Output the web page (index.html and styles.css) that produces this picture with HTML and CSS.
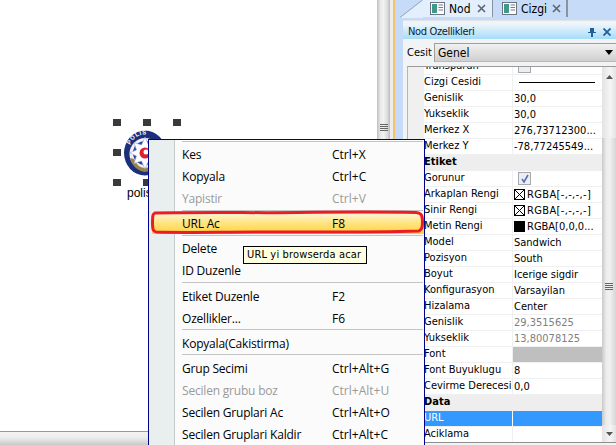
FILE: index.html
```html
<!DOCTYPE html>
<html lang="tr">
<head>
<meta charset="utf-8">
<title>Nod Ozellikleri</title>
<link rel="stylesheet" href="styles.css">
</head>
<body>
<div class="app">
  <div class="work">
    <div class="canvas">
      <svg class="badge" viewBox="0 0 44 46" width="44" height="46">
        <defs><path id="arc" d="M6 20C8 9 15 4.500 22 4.500S36 9 38 20"/></defs>
        <ellipse cx="22" cy="23" rx="21" ry="22.500" fill="#1c2f7c"/>
        <ellipse cx="22" cy="24" rx="15.500" ry="16" fill="#eef0f6"/>
        <path d="M7 28c2 8 8 13 15 14 7-1 13-6 15-14l-4 1c-2 5-6 9-11 9s-9-4-11-9z" fill="#9a8442"/>
        <circle cx="22" cy="23" r="12" fill="#2a45a0"/>
        <path d="M22 7l3.500 8 7.500-2.500-2.500 7.500 7 3-7 3 2.500 7.500-7.500-2.500-3.500 8-3.500-8-7.500 2.500 2.500-7.500-7-3 7-3-2.500-7.500 7.500 2.500z" fill="#fff" stroke="#9aa4c4" stroke-width=".6"/>
        <circle cx="22" cy="23" r="5.500" fill="#e01f2c"/>
        <circle cx="23" cy="22" r="2.500" fill="#fff"/>
        <text class="badge-text"><textPath href="#arc" startOffset="5">POLIS</textPath></text>
      </svg>
      <span class="handle h1"></span><span class="handle h2"></span><span class="handle h3"></span>
      <span class="handle h4"></span><span class="handle h5"></span><span class="handle h6"></span>
      <span class="node-label">polis</span>
    </div>
    <div class="hscroll"></div>
  </div>
  <div class="vscroll"><span class="grip"><i></i><i></i><i></i><i></i></span></div>
  <div class="gap"></div>
  <div class="splitter"></div>

  <div class="dock">
    <div class="tabs">
      <svg class="tab-slope" width="23" height="18" viewBox="0 0 23 18"><path d="M0 18L23 0V18z" fill="#e3effd"/><path d="M0 17.500L22.500 0" stroke="#9aa3ad" fill="none"/></svg>
      <div class="tab tab-active">
        <svg class="tab-icon" width="15" height="13" viewBox="0 0 15 13"><rect x=".5" y=".5" width="14" height="12" fill="#fff" stroke="#6d7680"/><rect x="2" y="2" width="5" height="9" fill="#3f9a8c"/><path d="M8.500 3H13M8.500 5.500H13M8.500 8H13" stroke="#778"/></svg>
        <span class="tab-name">Nod</span>
        <svg class="tab-x" width="9" height="9" viewBox="0 0 9 9"><path d="M1 1l7 7M8 1L1 8" stroke="#5c6670" stroke-width="1.600"/></svg>
      </div>
      <div class="tab tab-idle">
        <svg class="tab-icon" width="15" height="13" viewBox="0 0 15 13"><rect x=".5" y=".5" width="14" height="12" fill="#fff" stroke="#6d7680"/><rect x="2" y="2" width="5" height="9" fill="#3f9a8c"/><path d="M8.500 3H13M8.500 5.500H13M8.500 8H13" stroke="#778"/></svg>
        <span class="tab-name">Cizgi</span>
        <svg class="tab-x" width="9" height="9" viewBox="0 0 9 9"><path d="M1 1l7 7M8 1L1 8" stroke="#5c6670" stroke-width="1.600"/></svg>
      </div>
    </div>
    <div class="panel">
      <div class="title">
        <span class="title-text">Nod Ozellikleri</span>
        <svg width="8" height="10" viewBox="0 0 8 10"><path d="M2 1h4v4h2v1H5v4H3V6H0V5h2z" fill="#1f5f9c"/></svg>
        <svg class="title-x" width="8" height="8" viewBox="0 0 8 8"><path d="M.5 .5l7 7M7.500 .5l-7 7" stroke="#1f5f9c" stroke-width="1.800"/></svg>
      </div>
      <div class="filter">
        <span class="filter-label">Cesit</span>
        <div class="combo"><span>Genel</span><svg width="8" height="5" viewBox="0 0 8 5"><path d="M0 0h8L4 5z" fill="#000"/></svg></div>
      </div>
      <div class="grid-wrap">
        <div class="gutter"></div>
        <div class="grid">
          <div class="rows">
            <div class="row"><div class="k">Transparan</div><div class="v"><span class="check"></span></div></div>
            <div class="row"><div class="k">Cizgi Cesidi</div><div class="v"><span class="line-sample"></span></div></div>
            <div class="row"><div class="k">Genislik</div><div class="v">30,0</div></div>
            <div class="row"><div class="k">Yukseklik</div><div class="v">30,0</div></div>
            <div class="row"><div class="k">Merkez X</div><div class="v">276,73712300...</div></div>
            <div class="row"><div class="k">Merkez Y</div><div class="v">-78,77245549...</div></div>
            <div class="row cat">Etiket</div>
            <div class="row"><div class="k">Gorunur</div><div class="v"><span class="check checked"><svg width="10" height="10" viewBox="0 0 10 10"><path d="M2 5l2 3 4-7" fill="none" stroke="#5a6fb8" stroke-width="1.600"/></svg></span></div></div>
            <div class="row"><div class="k">Arkaplan Rengi</div><div class="v rgba"><svg class="swatch" width="11" height="11" viewBox="0 0 11 11"><rect x=".5" y=".5" width="10" height="10" fill="#fff" stroke="#000"/><path d="M1 1l9 9M10 1l-9 9" stroke="#000"/></svg>RGBA[-,-,-,-]</div></div>
            <div class="row"><div class="k">Sinir Rengi</div><div class="v rgba"><svg class="swatch" width="11" height="11" viewBox="0 0 11 11"><rect x=".5" y=".5" width="10" height="10" fill="#fff" stroke="#000"/><path d="M1 1l9 9M10 1l-9 9" stroke="#000"/></svg>RGBA[-,-,-,-]</div></div>
            <div class="row"><div class="k">Metin Rengi</div><div class="v"><svg class="swatch" width="11" height="11" viewBox="0 0 11 11"><rect width="11" height="11" fill="#000"/></svg>RGBA[0,0,0...</div></div>
            <div class="row"><div class="k">Model</div><div class="v">Sandwich</div></div>
            <div class="row"><div class="k">Pozisyon</div><div class="v">South</div></div>
            <div class="row"><div class="k">Boyut</div><div class="v">Icerige sigdir</div></div>
            <div class="row"><div class="k">Konfigurasyon</div><div class="v">Varsayilan</div></div>
            <div class="row"><div class="k">Hizalama</div><div class="v">Center</div></div>
            <div class="row"><div class="k">Genislik</div><div class="v muted">29,3515625</div></div>
            <div class="row"><div class="k">Yukseklik</div><div class="v muted">13,80078125</div></div>
            <div class="row"><div class="k">Font</div><div class="v filled"></div></div>
            <div class="row"><div class="k">Font Buyuklugu</div><div class="v">8</div></div>
            <div class="row"><div class="k">Cevirme Derecesi</div><div class="v">0,0</div></div>
            <div class="row cat">Data</div>
            <div class="row selected"><div class="k">URL</div><div class="v"></div></div>
            <div class="row"><div class="k">Aciklama</div><div class="v"></div></div>
          </div>
        </div>
        <div class="grid-scroll">
          <svg class="arrow" width="7" height="4" viewBox="0 0 7 4"><path d="M3.500 0L7 4H0z" fill="#555"/></svg>
          <div class="thumb"><span class="grip"><i></i><i></i><i></i><i></i></span></div>
          <svg class="arrow" width="7" height="4" viewBox="0 0 7 4"><path d="M0 0h7L3.500 4z" fill="#555"/></svg>
        </div>
      </div>
    </div>
  </div>
</div>

<div class="menu">
  <div class="strip"></div>
  <div class="menu-list">
    <div class="sep sep-top"></div>
    <div class="item"><span>Kes</span><span>Ctrl+X</span></div>
    <div class="item"><span>Kopyala</span><span>Ctrl+C</span></div>
    <div class="item off"><span>Yapistir</span><span>Ctrl+V</span></div>
    <div class="sep"></div>
    <div class="item hot"><span>URL Ac</span><span>F8</span></div>
    <div class="sep sep-thin"></div>
    <div class="item"><span>Delete</span><span></span></div>
    <div class="item"><span>ID Duzenle</span><span></span></div>
    <div class="sep"></div>
    <div class="item"><span>Etiket Duzenle</span><span>F2</span></div>
    <div class="item"><span>Ozellikler...</span><span>F6</span></div>
    <div class="sep sep-low"></div>
    <div class="item"><span>Kopyala(Cakistirma)</span><span></span></div>
    <div class="sep sep-low"></div>
    <div class="item"><span>Grup Secimi</span><span>Ctrl+Alt+G</span></div>
    <div class="item off"><span>Secilen grubu boz</span><span>Ctrl+Alt+U</span></div>
    <div class="item"><span>Secilen Gruplari Ac</span><span>Ctrl+Alt+O</span></div>
    <div class="item"><span>Secilen Gruplari Kaldir</span><span>Ctrl+Alt+C</span></div>
  </div>
</div>

<svg class="marker" width="280" height="30" viewBox="0 0 280 30">
  <path d="M7 5C60 4 110 5 150 4.500S240 4 268 4.500C272 5 274.500 6 274.500 13S274 21 271 23C220 24.500 170 24 120 24S30 25 8 24C5 23.500 4.500 21 4.500 14S5 6 7 5z" fill="none" stroke="#ed1c24" stroke-width="3"/>
</svg>

<div class="tooltip">URL yi browserda acar</div>
</body>
</html>
```

FILE: styles.css
```css
* { box-sizing: border-box; }
html, body { margin: 0; padding: 0; width: 616px; height: 445px; overflow: hidden; background: #fff; }
body { position: relative; font-family: "Open Sans", "Noto Sans", sans-serif; color: #000; }

.app { display: flex; width: 616px; height: 445px; }

.work { width: 377px; display: flex; flex-direction: column; }
.canvas { position: relative; flex: 1; background: #fff; }
.hscroll { height: 14px; border-top: 1px solid #999; background: linear-gradient(#f3f3f3, #ececec 45%, #c9c9c9); }

.badge { position: absolute; left: 123px; top: 130px; }
.badge-text { font: 700 6px "Liberation Sans", sans-serif; fill: #fff; letter-spacing: .6px; }
.handle { position: absolute; width: 8px; height: 7px; background: #3a3a3a; }
.h1 { left: 113px; top: 119px; }
.h2 { left: 143px; top: 119px; }
.h3 { left: 173px; top: 119px; }
.h4 { left: 113px; top: 149px; }
.h5 { left: 113px; top: 179px; }
.h6 { left: 143px; top: 179px; }
.node-label { position: absolute; left: 127px; top: 186px; font: 12px/14px "Liberation Sans", sans-serif; }

.vscroll { width: 13px; background: linear-gradient(90deg, #bdbdbd, #e8e8e8 25%, #f2f2f2 50%, #dcdcdc 80%, #b9b9b9); display: flex; flex-direction: column; justify-content: flex-start; align-items: center; padding-top: 124px; }
.grip { display: flex; flex-direction: column; gap: 1px; width: 8px; }
.grip i { display: block; height: 1px; background: #666; }
.gap { width: 3px; background: #ededed; }
.splitter { width: 2px; background: #f5c26b; }

.dock { flex: 1; min-width: 0; background: #c5dbf8; display: flex; flex-direction: column; font-family: "DejaVu Sans Condensed", "DejaVu Sans", sans-serif; font-size: 11px; padding-left: 5px; }

.tabs { height: 17px; display: flex; align-items: stretch; }
.tab-slope { flex: none; }
.tab { display: flex; align-items: center; font-size: 12px; }
.tab-active { width: 70px; background: #e3effd; border-right: 1px solid #8a949e; }
.tab-idle { width: 75px; background: #c5dbf8; border-right: 2px solid #8a949e; }
.tab-icon { margin-left: 7px; margin-right: 4px; flex: none; }
.tab-idle .tab-icon { margin-left: 9px; }
.tab-name { width: 26px; }
.tab-x { margin-left: 2px; flex: none; }
.tab-idle .tab-x { margin-left: 5px; }

.panel { margin-top: 3px; margin-left: 3px; flex: 1; min-height: 0; background: #f2f3f4; border-top: 1px solid #dfe4ea; display: flex; flex-direction: column; padding-top: 3px; }
.title { height: 15px; flex: none; display: flex; align-items: center; padding: 0 5px 0 5px; gap: 5px; background: linear-gradient(#edf6fc, #a6dcf8); color: #0a1c33; }
.title-text { flex: 1; letter-spacing: -.35px; }
.title-x { margin-left: 2px; }

.filter { height: 27px; flex: none; display: flex; align-items: center; padding-left: 4px; gap: 3px; }
.filter-label { width: 24px; }
.combo { flex: 1; height: 19px; display: flex; align-items: center; justify-content: space-between; padding: 0 3px 0 3px; background: linear-gradient(#f1f1f1, #cfcfcf); border: 1px solid #9e9e9e; border-right: 0; border-bottom-color: #bbb; font-size: 12px; }

.grid-wrap { height: 377px; flex: none; display: flex; margin-left: 4px; border-top: 1px solid #9a9a9a; border-bottom: 1px solid #8f8f8f; border-left: 1px solid #b5b5b5; }
.gutter { width: 16px; background: #f0f0f0; }
.grid { width: 178px; overflow: hidden; background: #fff; }
.rows { margin-top: -8px; }
.row { display: flex; height: 16px; line-height: 14px; border-bottom: 1px solid #f0f0f0; background: #fff; white-space: nowrap; overflow: hidden; }
.k { width: 89px; flex: none; border-right: 1px solid #f0f0f0; overflow: hidden; }
.v { flex: 1; min-width: 0; padding-left: 1px; display: flex; align-items: center; }
.rgba { letter-spacing: .35px; }
.cat { background: #eeeeee; font-weight: 700; border-bottom-color: #eee; }
.selected { background: #3399ff; color: #fff; }
.selected .k { border-right-color: #fff; }
.muted { color: #808080; }
.filled { background: #bfbfbf; }
.swatch { margin: 0 2px 0 0; flex: none; }
.check { display: flex; align-items: center; justify-content: center; width: 13px; height: 13px; margin-left: 4px; background: #eceff2; border: 1px solid #a5a9ad; }
.line-sample { display: block; width: 76px; height: 1px; background: #000; margin-left: 5px; }

.grid-scroll { flex: 1; background: linear-gradient(90deg, #e3e3e3, #f5f5f5 60%, #e3e3e3); display: flex; flex-direction: column; align-items: center; padding-top: 8px; padding-bottom: 6px; }
.thumb { width: 100%; flex: 1; margin: 59px 0 7px; padding-top: 10px; background: linear-gradient(90deg, #c9c9c9, #ececec 30%, #f1f1f1 55%, #d5d5d5); display: flex; align-items: center; justify-content: center; }

.menu { position: absolute; left: 148px; top: 139px; width: 277px; height: 320px; display: flex; background: #fbfbfb; border: 1px solid #00008b; font-size: 12px; }
.strip { width: 26px; flex: none; background: #e9eeee; border-right: 1px solid #c6c9c9; }
.menu-list { flex: 1; min-width: 0; }
.item { display: flex; height: 22px; align-items: center; padding-left: 7px; color: #000; }
.item span:first-child { width: 150px; flex: none; letter-spacing: -.2px; }
.off { color: #9a9a9a; }
.hot { position: relative; margin-left: -23px; padding-left: 30px; height: 21px; background: linear-gradient(#fdf6d8, #ffe585 45%, #ffd23c); }
.sep { height: 1px; background: #c4c4c4; margin: 1px 1px 2px 7px; }
.sep-top { margin: 1px 1px 1px 7px; }
.sep-thin { margin: 1px 1px 1px 7px; }
.sep-low { margin: 0 1px 2px 7px; }

.marker { position: absolute; left: 148px; top: 208px; }
.tooltip { position: absolute; left: 243px; top: 246px; width: 124px; height: 18px; background: #ffffe1; border: 1px solid #000; font-family: "DejaVu Sans Condensed", "DejaVu Sans", sans-serif; font-size: 11px; line-height: 15px; padding-left: 3px; white-space: nowrap; letter-spacing: .15px; }
```
